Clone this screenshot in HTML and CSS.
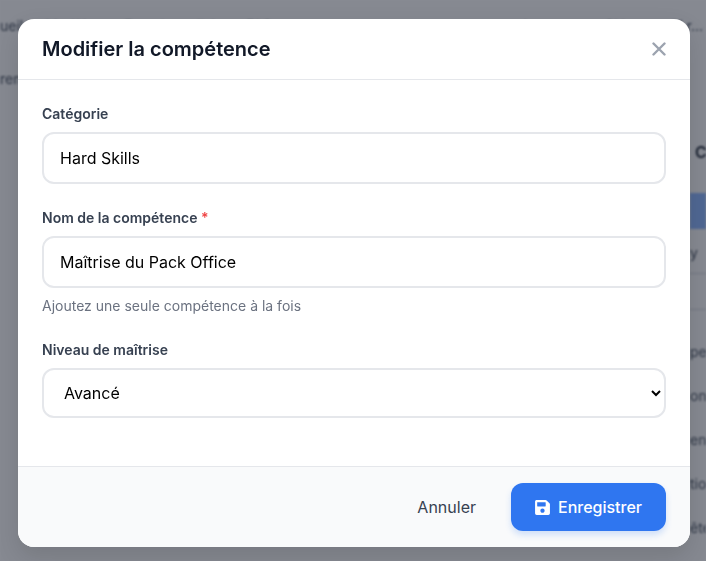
FILE: index.html
```html
<!DOCTYPE html>
<html lang="fr">
<head>
  <meta charset="UTF-8">
  <meta name="viewport" content="width=device-width, initial-scale=1.0">
  <title>Modifier la compétence</title>
  <link rel="stylesheet" href="styles.css">
</head>
<body>
  <!-- Page behind the dialog, only the edges show -->
  <div class="page">
    <div class="page-nav">
      <span>ueil</span>
      <span>Modèles</span>
      <span>Fonctionnalités</span>
      <span>FAQ</span>
      <span class="page-nav-right">Importer un CV ou profil r...</span>
    </div>
    <div class="page-sub">rem</div>
    <div class="page-side">
      <div class="side-title">CV</div>
      <div class="side-blue"></div>
      <div class="side-row side-row-y">y</div>
      <div class="side-row side-row-line"></div>
      <div class="side-list">
        <div class="side-item">pen</div>
        <div class="side-item">on</div>
        <div class="side-item">en</div>
        <div class="side-item">tio</div>
        <div class="side-item">ête</div>
      </div>
    </div>
  </div>

  <div class="overlay">
    <div class="modal">
      <div class="modal-header">
        <h2>Modifier la compétence</h2>
        <button class="close-btn" type="button" aria-label="Fermer">
          <svg viewBox="0 0 14 14" width="14" height="14"><path d="M1.5 1.5l11 11M12.5 1.5l-11 11" stroke="currentColor" stroke-width="2.4" stroke-linecap="round"/></svg>
        </button>
      </div>

      <div class="modal-body">
        <div class="field">
          <label>Catégorie</label>
          <input type="text" value="Hard Skills">
        </div>
        <div class="field">
          <label>Nom de la compétence <span class="required">*</span></label>
          <input type="text" value="Maîtrise du Pack Office">
          <p class="hint">Ajoutez une seule compétence à la fois</p>
        </div>
        <div class="field">
          <label>Niveau de maîtrise</label>
          <select>
            <option>Débutant</option>
            <option>Intermédiaire</option>
            <option selected>Avancé</option>
            <option>Expert</option>
          </select>
        </div>
      </div>

      <div class="modal-footer">
        <button class="btn-cancel" type="button">Annuler</button>
        <button class="btn-save" type="button">
          <svg viewBox="0 0 448 512" width="15" height="17"><path fill="currentColor" d="M433.941 129.941l-83.882-83.882A48 48 0 0 0 316.118 32H48C21.49 32 0 53.49 0 80v352c0 26.51 21.49 48 48 48h352c26.51 0 48-21.49 48-48V163.882a48 48 0 0 0-14.059-33.941zM224 416c-35.346 0-64-28.654-64-64 0-35.346 28.654-64 64-64s64 28.654 64 64c0 35.346-28.654 64-64 64zm96-304.52V212c0 6.627-5.373 12-12 12H76c-6.627 0-12-5.373-12-12V108c0-6.627 5.373-12 12-12h228.52c3.183 0 6.235 1.264 8.485 3.515l3.48 3.48A11.996 11.996 0 0 1 320 111.48z"/></svg>
          Enregistrer
        </button>
      </div>
    </div>
  </div>
</body>
</html>
```

FILE: styles.css
```css
/* General */
* {
  box-sizing: border-box;
}

html, body {
  margin: 0;
  height: 100%;
  overflow: hidden;
}

body {
  font-family: 'Inter', 'Liberation Sans', sans-serif;
  color: #111827;
  background: #fff;
}

/* Page behind */
.page {
  height: 561px;
  overflow: hidden;
  filter: blur(1px);
  color: #4b5563;
  font-size: 14px;
  background: #fafafa;
}

.page-nav {
  display: flex;
  gap: 22px;
  height: 52px;
  padding-top: 16px;
  line-height: 20px;
  white-space: nowrap;
}

.page-nav-right {
  margin-left: auto;
  padding-right: 3px;
}

.page-sub {
  height: 37px;
  padding-top: 17px;
  line-height: 20px;
}

.page-side {
  margin: 53px 0 0 690px;
}

.side-title {
  height: 51px;
  padding-left: 5px;
  font-size: 16px;
  font-weight: 600;
  color: #1f2937;
  line-height: 20px;
}

.side-blue {
  height: 36px;
  background: #8fb8ff;
}

.side-row {
  border-bottom: 1px solid #d1d5db;
}

.side-row-y {
  height: 45px;
  padding-top: 14px;
  line-height: 20px;
}

.side-row-line {
  height: 36px;
}

.side-list {
  padding-top: 20px;
}

.side-item {
  height: 44px;
  padding-top: 12px;
  line-height: 20px;
}

/* Dialog */
.overlay {
  position: fixed;
  inset: 0;
  display: flex;
  align-items: flex-start;
  justify-content: center;
  padding: 19px 0 0 2px;
  background: rgba(17, 24, 39, 0.5);
}

.modal {
  width: 672px;
  height: 528px;
  display: flex;
  flex-direction: column;
  background: #fff;
  border-radius: 16px;
  box-shadow: 0 10px 25px rgba(0, 0, 0, 0.12);
  overflow: hidden;
}

.modal-header {
  display: flex;
  align-items: center;
  justify-content: space-between;
  height: 61px;
  padding: 0 24px;
  border-bottom: 1px solid #e5e7eb;
}

.modal-header h2 {
  margin: 0;
  font-size: 20px;
  font-weight: 600;
  line-height: 60px;
  color: #111827;
}

.close-btn {
  display: flex;
  padding: 0;
  border: none;
  background: none;
  color: #9ca3af;
}

.modal-body {
  flex: 1;
  padding: 24px 24px 0;
}

.field {
  margin-bottom: 24px;
}

.field label {
  display: block;
  margin-bottom: 8px;
  font-size: 14px;
  font-weight: 600;
  line-height: 20px;
  color: #374151;
}

.required {
  color: #ef4444;
}

.field input,
.field select {
  display: block;
  width: 100%;
  height: 52px;
  padding: 0 16px;
  font-family: inherit;
  font-size: 16px;
  color: #000;
  background: #fff;
  border: 2px solid #e5e7eb;
  border-radius: 12px;
  outline: none;
}

.field select {
  height: 50px;
}

.hint {
  margin: 8px 0 0;
  font-size: 14px;
  line-height: 20px;
  color: #6b7280;
}

/* Footer */
.modal-footer {
  display: flex;
  align-items: center;
  justify-content: flex-end;
  gap: 12px;
  height: 81px;
  padding: 0 24px;
  background: #f9fafb;
  border-top: 1px solid #e5e7eb;
}

.btn-cancel,
.btn-save {
  height: 48px;
  font-family: inherit;
  font-size: 16px;
  border: none;
  border-radius: 12px;
}

.btn-cancel {
  padding: 0 23px;
  font-weight: 400;
  background: none;
  color: #374151;
}

.btn-save {
  display: flex;
  align-items: center;
  justify-content: center;
  gap: 8px;
  width: 155px;
  font-weight: 500;
  color: #fff;
  background: #2f76f0;
  box-shadow: 0 4px 6px rgba(47, 118, 240, 0.2);
}
```
